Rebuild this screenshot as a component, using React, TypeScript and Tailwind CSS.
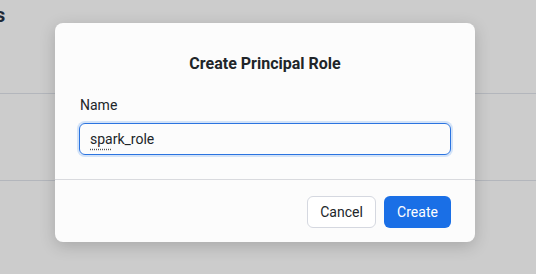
import React from "react";

export default function App() {
  return (
    <div
      className="relative w-[536px] h-[274px] overflow-hidden bg-[#cccccc]"
      style={{ fontFamily: "Roboto, 'Liberation Sans', sans-serif" }}
    >
      {/* background page (dimmed) */}
      <div className="flex flex-col">
        <div className="h-[30px] pt-[3px] -ml-[5px] text-[20px] font-bold leading-[24px] text-[#1f2937]">s</div>
        <div className="h-[63px]" />
        <div className="h-px bg-[#b3b6bc]" />
        <div className="h-[86px]" />
        <div className="h-px bg-[#b3b6bc]" />
      </div>

      {/* dialog */}
      <div className="absolute left-[55px] top-[23px] w-[420px] h-[219px] rounded-[8px] bg-[#fcfcfc] shadow-[0_4px_16px_rgba(0,0,0,0.18)] flex flex-col">
        <div className="pt-[29px] text-center text-[16px] leading-[24px] font-bold text-[#212529]">
          Create Principal Role
        </div>
        <div className="px-[24px] pt-[19px]">
          <div className="pl-px text-[14px] leading-[20px] text-[#212529]">Name</div>
          <div className="mt-[8px] h-[32px] rounded-[6px] border border-[#2b74e0] shadow-[0_0_0_2px_rgba(26,115,232,0.18)] flex items-center pl-[10px] text-[14px] text-[#212529]">
            <span className="underline decoration-dotted decoration-[#555] underline-offset-[5px]">spa</span>
            <span>rk_role</span>
          </div>
        </div>
        <div className="mt-[24px] h-px bg-[#d9dade]" />
        <div className="flex justify-end gap-[8px] pr-[24px] pt-[16px]">
          <div className="h-[32px] w-[69px] justify-center rounded-[6px] border border-[#d5d8e0] bg-white flex items-center text-[14px] text-[#212529]">
            Cancel
          </div>
          <div className="h-[32px] w-[67px] justify-center rounded-[6px] bg-[#1a6fe6] flex items-center text-[14px] text-white">
            Create
          </div>
        </div>
      </div>
    </div>
  );
}
